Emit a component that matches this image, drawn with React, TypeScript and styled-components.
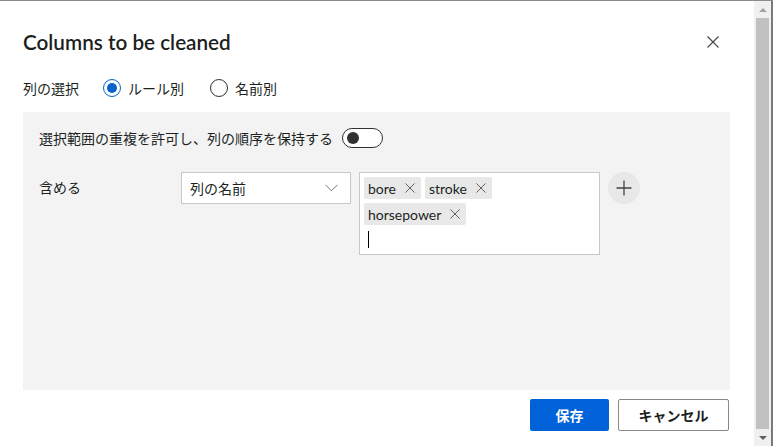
import React from 'react'
import styled, { createGlobalStyle } from 'styled-components'

const GlobalStyle = createGlobalStyle`
  html, body {
    margin: 0;
    padding: 0;
    width: 773px;
    height: 446px;
    overflow: hidden;
    background: #ffffff;
  }
  body {
    font-family: Lato, "Noto Sans CJK JP", sans-serif;
    font-size: 14px;
    color: #201f1e;
  }
`

const tags = ['bore', 'stroke', 'horsepower']

const CloseIcon: React.FC<{ size: number; color: string }> = ({ size, color }) => (
  <svg width={size} height={size} viewBox="0 0 12 12">
    <path d="M0.5 0.5 L11.5 11.5 M11.5 0.5 L0.5 11.5" stroke={color} strokeWidth="1.1" fill="none" />
  </svg>
)

const App: React.FC = () => {
  return (
    <Frame>
      <GlobalStyle />
      <Dialog>
        <Header>
          <Title>Columns to be cleaned</Title>
          <CloseButton>
            <CloseIcon size={12} color="#444" />
          </CloseButton>
        </Header>

        <ModeRow>
          <ModeLabel>列の選択</ModeLabel>
          <RadioOption>
            <Radio checked />
            ルール別
          </RadioOption>
          <RadioOption>
            <Radio />
            名前別
          </RadioOption>
        </ModeRow>

        <Panel>
          <ToggleRow>
            選択範囲の重複を許可し、列の順序を保持する
            <Toggle>
              <Knob />
            </Toggle>
          </ToggleRow>

          <RuleRow>
            <RuleLabel>含める</RuleLabel>
            <Select>
              列の名前
              <svg width="13" height="8" viewBox="0 0 13 8">
                <path d="M0.5 0.8 L6.5 6.8 L12.5 0.8" stroke="#777" strokeWidth="1" fill="none" />
              </svg>
            </Select>
            <TagBox>
              <TagList>
                {tags.map((t) => (
                  <Tag key={t}>
                    {t}
                    <CloseIcon size={10} color="#555" />
                  </Tag>
                ))}
              </TagList>
              <Caret />
            </TagBox>
            <AddButton>
              <svg width="16" height="16" viewBox="0 0 16 16">
                <path d="M8 0.5 V15.5 M0.5 8 H15.5" stroke="#444" strokeWidth="1.3" fill="none" />
              </svg>
            </AddButton>
          </RuleRow>
        </Panel>

        <Footer>
          <PrimaryButton>保存</PrimaryButton>
          <SecondaryButton>キャンセル</SecondaryButton>
        </Footer>
      </Dialog>

      <Scrollbar>
        <Arrow />
        <Thumb />
        <Arrow down />
      </Scrollbar>
      <EdgeStrip />
    </Frame>
  )
}

const Frame = styled.div`
  display: flex;
  height: 446px;
  box-sizing: border-box;
  border-top: 1px solid #8c8c8c;
`

const Dialog = styled.div`
  flex: 1;
  display: flex;
  flex-direction: column;
  padding: 0 24px 0 23px;
`

const Header = styled.div`
  display: flex;
  align-items: center;
  justify-content: space-between;
  height: 26px;
  margin-top: 28px;
`

const Title = styled.div`
  font-size: 20.7px;
  font-weight: 600;
  color: #201f1e;
`

const CloseButton = styled.div`
  display: flex;
  margin-right: 11px;
`

const ModeRow = styled.div`
  display: flex;
  align-items: center;
  height: 20px;
  margin-top: 23px;
`

const ModeLabel = styled.div`
  width: 80px;
`

const RadioOption = styled.div`
  display: flex;
  align-items: center;
  gap: 7px;
  margin-right: 26px;
`

const Radio = styled.span<{ checked?: boolean }>`
  width: 18px;
  height: 18px;
  box-sizing: border-box;
  border-radius: 50%;
  border: 1px solid ${(p) => (p.checked ? '#0a62d0' : '#323130')};
  display: flex;
  align-items: center;
  justify-content: center;
  &::after {
    content: '';
    width: 10px;
    height: 10px;
    border-radius: 50%;
    background: ${(p) => (p.checked ? '#0a62d0' : 'transparent')};
  }
`

const Panel = styled.div`
  margin-top: 14px;
  height: 278px;
  background: #f3f3f3;
  padding: 16px 16px;
  box-sizing: border-box;
`

const ToggleRow = styled.div`
  display: flex;
  align-items: center;
  gap: 9px;
  height: 20px;
`

const Toggle = styled.div`
  width: 41px;
  height: 20px;
  box-sizing: border-box;
  border: 1px solid #323130;
  border-radius: 10px;
  background: #fff;
  display: flex;
  align-items: center;
  padding-left: 4px;
`

const Knob = styled.div`
  width: 12px;
  height: 12px;
  border-radius: 50%;
  background: #323130;
`

const RuleRow = styled.div`
  display: flex;
  align-items: flex-start;
  margin-top: 24px;
`

const RuleLabel = styled.div`
  width: 142px;
  line-height: 32px;
`

const Select = styled.div`
  width: 170px;
  height: 32px;
  box-sizing: border-box;
  background: #fff;
  border: 1px solid #c8c8c8;
  display: flex;
  align-items: center;
  justify-content: space-between;
  padding: 0 12px 0 8px;
`

const TagBox = styled.div`
  margin-left: 8px;
  width: 241px;
  height: 83px;
  box-sizing: border-box;
  background: #fff;
  border: 1px solid #c8c8c8;
  padding: 4px;
`

const TagList = styled.div`
  display: flex;
  flex-wrap: wrap;
  gap: 4px;
`

const Tag = styled.div`
  display: flex;
  align-items: center;
  gap: 9px;
  height: 22px;
  padding: 0 6px 0 4px;
  background: #e8e8e8;
  border-radius: 2px;
  color: #201f1e;
`

const Caret = styled.div`
  width: 1px;
  height: 17px;
  background: #000;
  margin: 6px 0 0 4px;
`

const AddButton = styled.div`
  margin-left: 8px;
  width: 32px;
  height: 32px;
  border-radius: 50%;
  background: #e8e8e8;
  display: flex;
  align-items: center;
  justify-content: center;
`

const Footer = styled.div`
  display: flex;
  justify-content: flex-end;
  gap: 9px;
  margin-top: 9px;
  padding-right: 1px;
`

const ButtonBase = styled.div`
  height: 32px;
  box-sizing: border-box;
  border-radius: 2px;
  display: flex;
  align-items: center;
  justify-content: center;
  font-weight: 600;
  font-size: 14px;
`

const PrimaryButton = styled(ButtonBase)`
  width: 79px;
  background: #0062d9;
  color: #fff;
`

const SecondaryButton = styled(ButtonBase)`
  width: 111px;
  background: #fff;
  border: 1px solid #8a8886;
  color: #201f1e;
`

const Scrollbar = styled.div`
  width: 17px;
  background: #f0f0f0;
  display: flex;
  flex-direction: column;
  align-items: center;
`

const Arrow = styled.div<{ down?: boolean }>`
  height: 17px;
  display: flex;
  align-items: center;
  justify-content: center;
  &::after {
    content: '';
    border-left: 4px solid transparent;
    border-right: 4px solid transparent;
    ${(p) => (p.down ? 'border-top: 4px solid #606060;' : 'border-bottom: 4px solid #a3a3a3;')}
  }
`

const Thumb = styled.div`
  flex: 1;
  width: 13px;
  background: #c1c1c1;
`

const EdgeStrip = styled.div`
  width: 2px;
  background: #7a7a7a;
`

export default App
